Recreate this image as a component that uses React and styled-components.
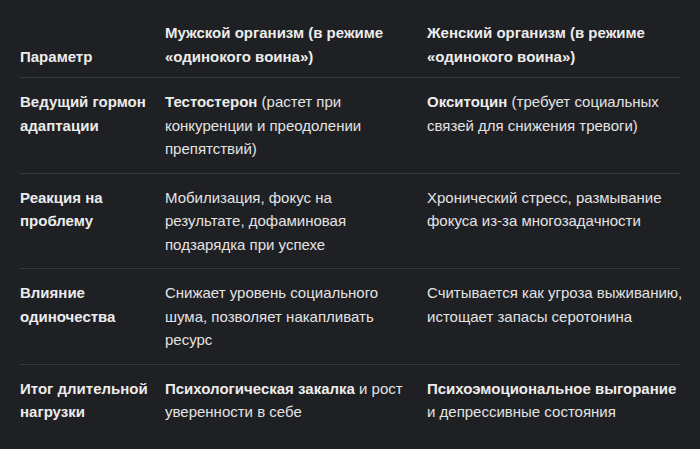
import styled, { createGlobalStyle } from "styled-components";

const GlobalStyle = createGlobalStyle`
  html, body {
    margin: 0;
    padding: 0;
    background: #1f2023;
  }
  body {
    font-family: "Liberation Sans", Arial, sans-serif;
    color: #e3e3e3;
  }
`;

const rows = [
  {
    param: "Ведущий гормон адаптации",
    male: [<b key="b">Тестостерон</b>, " (растет при конкуренции и преодолении препятствий)"],
    female: [<b key="b">Окситоцин</b>, " (требует социальных связей для снижения тревоги)"],
  },
  {
    param: "Реакция на проблему",
    male: ["Мобилизация, фокус на результате, дофаминовая подзарядка при успехе"],
    female: ["Хронический стресс, размывание фокуса из-за многозадачности"],
  },
  {
    param: "Влияние одиночества",
    male: ["Снижает уровень социального шума, позволяет накапливать ресурс"],
    female: ["Считывается как угроза выживанию, истощает запасы серотонина"],
  },
  {
    param: "Итог длительной нагрузки",
    male: [<b key="b">Психологическая закалка</b>, " и рост уверенности в себе"],
    female: [<b key="b">Психоэмоциональное выгорание</b>, " и депрессивные состояния"],
  },
];

const App = () => {
  return (
    <Page>
      <GlobalStyle />
      <Table>
        <Row $head>
          <HeadCell>Параметр</HeadCell>
          <HeadCell>Мужской организм (в режиме «одинокого воина»)</HeadCell>
          <HeadCell $last>Женский организм (в режиме «одинокого воина»)</HeadCell>
        </Row>
        {rows.map((r, i) => (
          <Row key={i} $lastRow={i === rows.length - 1}>
            <ParamCell>{r.param}</ParamCell>
            <Cell>{r.male}</Cell>
            <Cell $last>{r.female}</Cell>
          </Row>
        ))}
      </Table>
    </Page>
  );
};

const Page = styled.div`
  padding: 0 20px;
  min-height: 449px;
  box-sizing: border-box;
`;

const Table = styled.div`
  width: 660px;
  font-size: 15px;
  line-height: 23.5px;
`;

const Row = styled.div`
  display: grid;
  grid-template-columns: 145px 262px 1fr;
  align-items: ${(p) => (p.$head ? "end" : "start")};
  padding: ${(p) => (p.$head ? "21px 0 9px" : "12px 0")};
  border-bottom: ${(p) => (p.$lastRow ? "none" : "1px solid #37383c")};
`;

const Cell = styled.div`
  padding-right: ${(p) => (p.$last ? "0" : "16px")};
  margin-right: ${(p) => (p.$last ? "-6px" : "0")};
  b {
    font-weight: 700;
    color: #ececec;
  }
`;

const HeadCell = styled(Cell)`
  font-weight: 700;
  color: #ececec;
`;

const ParamCell = styled(Cell)`
  font-weight: 700;
  color: #ececec;
`;

export default App;
